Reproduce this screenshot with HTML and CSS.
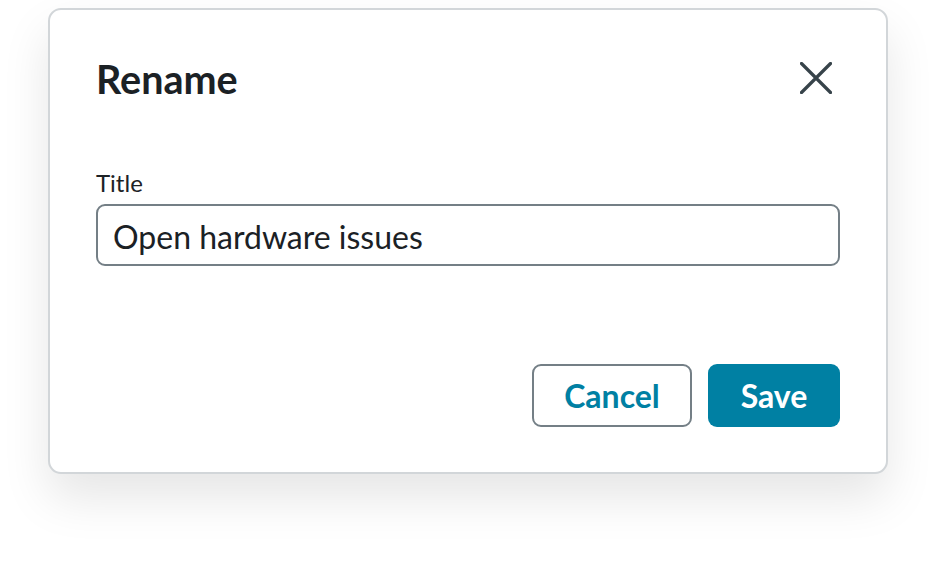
FILE: index.html
```html
<!DOCTYPE html>
<html lang="en">
<head>
<meta charset="utf-8">
<title>Rename</title>
<link rel="stylesheet" href="styles.css">
</head>
<body>
<div class="page">
<div class="dialog" role="dialog" aria-labelledby="dlg-title">
  <div class="header">
    <h1 id="dlg-title" class="title">Rename</h1>
    <button class="close" aria-label="Close">
      <svg width="32" height="32" viewBox="0 0 32 32"><path d="M1.5 1.5 L30.5 30.5 M30.5 1.5 L1.5 30.5" stroke="#37434a" stroke-width="3.2" stroke-linecap="round" fill="none"/></svg>
    </button>
  </div>
  <label class="label" for="title-input">Title</label>
  <div class="input"><span class="value">Open hardware issues</span></div>
  <div class="actions">
    <button class="btn btn-secondary">Cancel</button>
    <button class="btn btn-primary">Save</button>
  </div>
</div>
</div>
</body>
</html>
```
FILE: styles.css
```css
* { box-sizing: border-box; }
html, body { margin: 0; padding: 0; background: #ffffff; }
body { font-family: Lato, "Noto Sans", sans-serif; color: #1d2226; }
.page {
  width: 936px;
  height: 564px;
  padding: 8px 0 0 48px;
  overflow: hidden;
}
.dialog {
  width: 840px;
  height: 466px;
  background: #fff;
  border: 2px solid #d2d6d9;
  border-radius: 13px;
  box-shadow: 0 24px 48px rgba(0, 0, 0, 0.1);
  padding: 45px 46px 45px 46px;
  display: flex;
  flex-direction: column;
}
.header {
  display: flex;
  justify-content: space-between;
  align-items: flex-start;
  height: 48px;
}
.title {
  margin: 0;
  font-size: 39.5px;
  line-height: 48px;
  font-weight: 700;
  color: #1b2125;
}
.close {
  margin: 7px 8px 0 0;
  padding: 0;
  border: 0;
  background: none;
  width: 32px;
  height: 32px;
  display: block;
}
.close svg { display: block; }
.label {
  margin-top: 65px;
  font-size: 24px;
  line-height: 29px;
  color: #1d2226;
}
.input {
  margin-top: 7px;
  height: 62px;
  border: 2px solid #747f86;
  border-radius: 9px;
  padding: 2px 15px 0;
  display: flex;
  align-items: center;
}
.value { font-size: 32px; color: #1b2125; }
.actions {
  margin-top: auto;
  display: flex;
  justify-content: flex-end;
  gap: 16px;
}
.btn {
  height: 63px;
  border-radius: 9px;
  font-family: Lato, "Noto Sans", sans-serif;
  font-weight: 700;
  font-size: 32px;
  padding: 0;
}
.btn-secondary {
  width: 160px;
  background: #fff;
  border: 2px solid #747f86;
  color: #0080a3;
}
.btn-primary {
  width: 132px;
  background: #0080a3;
  border: 0;
  color: #fff;
}
```
